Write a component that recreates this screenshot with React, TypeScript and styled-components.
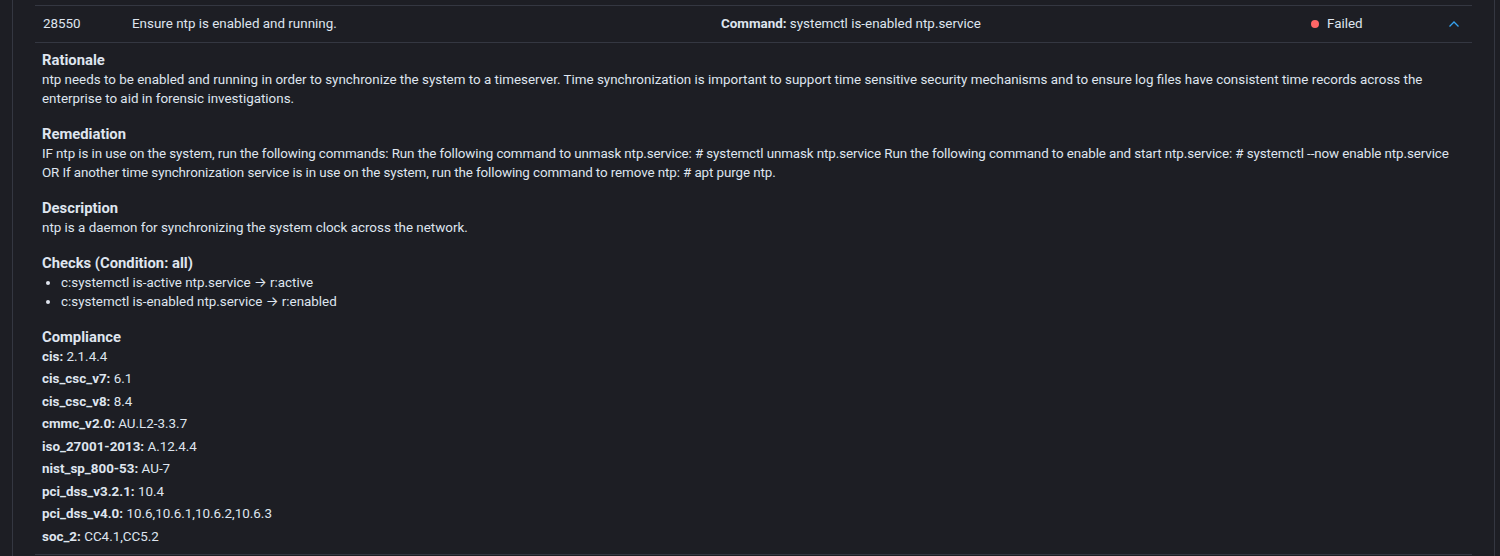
import React from "react";
import styled, { createGlobalStyle } from "styled-components";

const GlobalStyle = createGlobalStyle`
  html, body {
    margin: 0;
    padding: 0;
    background: #1d1e24;
  }
  body {
    font-family: Roboto, Inter, "Liberation Sans", sans-serif;
    font-size: 13.4px;
    color: #dfe5ef;
    -webkit-font-smoothing: antialiased;
  }
`;

const Panel = styled.div`
  box-sizing: border-box;
  margin-left: 12px;
  width: 1483px;
  min-height: 556px;
  border-left: 1px solid #343741;
  border-right: 1px solid #343741;
  padding: 5px 22px 0 22px;
`;

const Table = styled.div`
  border-top: 1px solid #343741;
`;

const Row = styled.div`
  display: grid;
  grid-template-columns: 89px 589px 590px 133px 36px;
  height: 35px;
  padding-bottom: 1px;
  align-items: center;
  border-bottom: 1px solid #343741;
  line-height: 19px;
`;

const Cell = styled.div<{ $center?: boolean }>`
  padding: 0 8px;
  display: flex;
  align-items: center;
  justify-content: ${(p) => (p.$center ? "center" : "flex-start")};
  white-space: nowrap;
`;

const Bold = styled.span`
  font-weight: 700;
`;

const Dot = styled.span`
  width: 8px;
  height: 8px;
  border-radius: 50%;
  background: #f66;
  margin-right: 8px;
  flex: none;
`;

const Expanded = styled.div`
  padding: 8px 8px 8px 7px;
  border-bottom: 1px solid #343741;
  line-height: 19px;
  display: flex;
  flex-direction: column;
  gap: 17px;
`;

const Section = styled.section`
  display: flex;
  flex-direction: column;
`;

const Heading = styled.div`
  font-weight: 700;
  font-size: 14.8px;
`;

const Para = styled.div<{ $tight?: boolean }>`
  letter-spacing: ${(p) => (p.$tight ? "-0.1px" : "normal")};
`;

const List = styled.ul`
  margin: 0;
  padding-left: 19px;
  list-style: disc;
  & li::marker {
    font-size: 13px;
  }
`;

const ComplianceList = styled.div`
  display: flex;
  flex-direction: column;
  gap: 3.44px;
`;

const Chevron = () => (
  <svg width="12" height="8" viewBox="0 0 12 8" fill="none">
    <path d="M1.5 6.5 L6 2 L10.5 6.5" stroke="#36a2ef" strokeWidth="1.3" />
  </svg>
);

const compliance: [string, string][] = [
  ["cis", "2.1.4.4"],
  ["cis_csc_v7", "6.1"],
  ["cis_csc_v8", "8.4"],
  ["cmmc_v2.0", "AU.L2-3.3.7"],
  ["iso_27001-2013", "A.12.4.4"],
  ["nist_sp_800-53", "AU-7"],
  ["pci_dss_v3.2.1", "10.4"],
  ["pci_dss_v4.0", "10.6,10.6.1,10.6.2,10.6.3"],
  ["soc_2", "CC4.1,CC5.2"],
];

export default function App() {
  return (
    <>
      <GlobalStyle />
      <Panel>
        <Table>
          <Row>
            <Cell>28550</Cell>
            <Cell>Ensure ntp is enabled and running.</Cell>
            <Cell>
              <Bold>Command:</Bold>&nbsp;systemctl is-enabled ntp.service
            </Cell>
            <Cell>
              <Dot />
              Failed
            </Cell>
            <Cell $center>
              <Chevron />
            </Cell>
          </Row>
          <Expanded>
            <Section>
              <Heading>Rationale</Heading>
              <Para>
                ntp needs to be enabled and running in order to synchronize the system to a timeserver. Time
                synchronization is important to support time sensitive security mechanisms and to ensure log files
                have consistent time records across the enterprise to aid in forensic investigations.
              </Para>
            </Section>
            <Section>
              <Heading>Remediation</Heading>
              <Para $tight>
                IF ntp is in use on the system, run the following commands: Run the following command to unmask
                ntp.service: # systemctl unmask ntp.service Run the following command to enable and start
                ntp.service: # systemctl --now enable ntp.service OR If another time synchronization service is in
                use on the system, run the following command to remove ntp: # apt purge ntp.
              </Para>
            </Section>
            <Section>
              <Heading>Description</Heading>
              <Para>ntp is a daemon for synchronizing the system clock across the network.</Para>
            </Section>
            <Section>
              <Heading>Checks (Condition: all)</Heading>
              <List>
                <li>c:systemctl is-active ntp.service → r:active</li>
                <li>c:systemctl is-enabled ntp.service → r:enabled</li>
              </List>
            </Section>
            <Section>
              <Heading>Compliance</Heading>
              <ComplianceList>
                {compliance.map(([k, v]) => (
                  <div key={k}>
                    <Bold>{k}:</Bold> {v}
                  </div>
                ))}
              </ComplianceList>
            </Section>
          </Expanded>
        </Table>
      </Panel>
    </>
  );
}
